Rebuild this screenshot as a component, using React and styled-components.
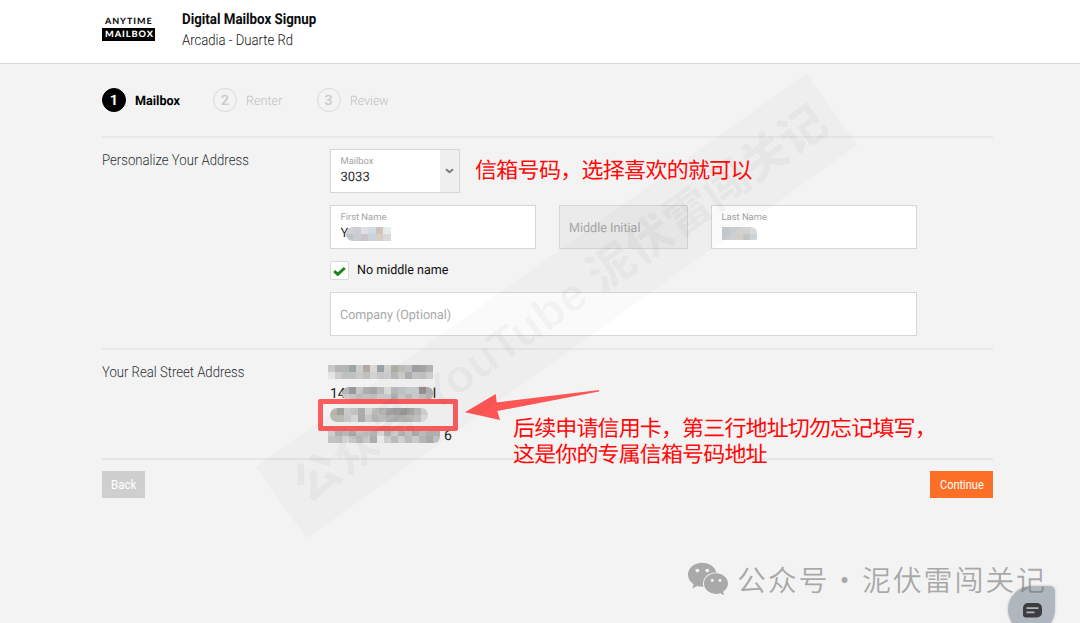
import React, { useLayoutEffect, useRef, useState } from "react";
import styled, { createGlobalStyle } from "styled-components";
import { FaWeixin } from "react-icons/fa";

const Global = createGlobalStyle`
  *, *::before, *::after { box-sizing: border-box; }
  html, body { margin: 0; padding: 0; }
  body { background: #f3f3f3; font-family: Roboto, "Liberation Sans", sans-serif; overflow: hidden; text-rendering: geometricPrecision; }
`;

const Page = styled.div`
  position: relative;
  height: 623px;
  overflow: hidden;
  background: #f3f3f3;
`;

/* Text set to an exact measure, standing in for a condensed face. */
const FitBox = styled.span`
  display: inline-block;
  width: ${(p) => p.$w}px;
  white-space: nowrap;
`;
const FitInner = styled.span`
  display: inline-block;
  transform-origin: 0 50%;
`;
function Fit({ w, children }) {
  const ref = useRef(null);
  const [k, setK] = useState(1);
  useLayoutEffect(() => {
    setK(w / ref.current.offsetWidth);
  }, [w]);
  return (
    <FitBox $w={w}>
      <FitInner ref={ref} style={{ transform: `scaleX(${k})` }}>{children}</FitInner>
    </FitBox>
  );
}

const Header = styled.header`
  display: flex;
  height: 64px;
  padding: 8px 0 0 102px;
  gap: 27.2px;
  background: #fff;
  border-bottom: 1px solid #d9d9d9;
`;
const Logo = styled.div`
  width: 53px;
  padding-top: 7px;
  font: 900 8.8px/11px Lato, sans-serif;
  letter-spacing: 0.9px;
  text-align: center;
  color: #111;
`;
const LogoTop = styled.div`
  height: 12.5px;
  line-height: 12px;
`;
const LogoBar = styled.div`
  height: 13.5px;
  line-height: 12px;
  background: #000;
  color: #fff;
`;
const Title = styled.div`
  font-size: 15px;
  line-height: 22px;
  font-weight: 700;
  color: #0c0c0c;
`;
const Subtitle = styled.div`
  font-size: 15px;
  line-height: 21px;
  font-weight: 300;
  color: #111;
`;

const Content = styled.main`
  width: 891px;
  margin-left: 102px;
`;
const Steps = styled.nav`
  display: flex;
  height: 72px;
  padding-top: 24px;
  align-items: flex-start;
`;
const Step = styled.div`
  display: flex;
  align-items: center;
  gap: 9px;
  height: 24px;
  width: ${(p) => p.$w}px;
  font-size: 13px;
  font-weight: ${(p) => (p.$active ? 700 : 300)};
  color: ${(p) => (p.$active ? "#000" : "#c0c0c0")};
`;
const StepNumber = styled.span`
  display: flex;
  align-items: center;
  justify-content: center;
  width: 24px;
  height: 24px;
  border-radius: 50%;
  font-size: 14.5px;
  font-weight: 700;
  border: 1.5px solid ${(p) => (p.$active ? "#000" : "#d9d9d9")};
  background: ${(p) => (p.$active ? "#000" : "transparent")};
  color: ${(p) => (p.$active ? "#fff" : "#cecece")};
`;
const StepLabel = styled.span`
  padding-top: 2px;
`;

const Section = styled.section`
  display: flex;
  height: ${(p) => p.$h}px;
  padding-top: 11px;
  border-top: 2px solid #e8e8e8;
`;
const SectionTitle = styled.h2`
  width: 228px;
  margin: 0;
  padding-top: 1px;
  font-size: 15px;
  line-height: 20px;
  font-weight: 300;
  color: #2a2f32;
`;
const Form = styled.div`
  width: 587px;
  display: flex;
  flex-direction: column;
`;
const FieldRow = styled.div`
  display: flex;
  justify-content: space-between;
  margin-bottom: 12px;
`;
const Field = styled.div`
  display: flex;
  flex-direction: column;
  justify-content: ${(p) => (p.$empty ? "center" : "flex-start")};
  position: relative;
  width: ${(p) => p.$w}px;
  height: 44px;
  padding: ${(p) => (p.$empty ? "2px 0 0 9px" : "5px 0 0 9.5px")};
  border: 1px solid #d6d6d6;
  background: ${(p) => (p.$disabled ? "#ebebeb" : "#fff")};
`;
const FieldLabel = styled.span`
  font-size: 9.4px;
  line-height: 14px;
  color: #a4a4a4;
`;
const FieldValue = styled.span`
  display: flex;
  align-items: center;
  height: 17px;
  font-size: 13px;
  color: #2a2a2a;
`;
const Placeholder = styled.span`
  font-size: 13px;
  color: #a8a8a8;
`;
const SelectButton = styled.span`
  position: absolute;
  top: 0;
  right: 0;
  bottom: 0;
  width: 19px;
  display: flex;
  align-items: center;
  justify-content: center;
  background: #f0f0f0;
`;
const CheckRow = styled.label`
  display: flex;
  gap: 8px;
  height: 31px;
  font-size: 13px;
  line-height: 19px;
  color: #111;
`;
const CheckBox = styled.span`
  display: flex;
  align-items: center;
  justify-content: center;
  width: 19px;
  height: 19px;
  border: 1px solid #d9d9d9;
  border-radius: 2px;
  background: #fff;
`;

const MosaicGrid = styled.span`
  display: grid;
  grid-template-columns: repeat(${(p) => p.$cols}, ${(p) => p.$cw}px);
  grid-auto-rows: ${(p) => p.$rh}px;
  margin-left: ${(p) => p.$x || 0}px;
  border-radius: ${(p) => p.$r || 0};
  overflow: hidden;
`;
const MosaicCell = styled.i`
  background: ${(p) => p.$c};
`;
function Mosaic({ rows, rh = 7, cw = 7, x, r }) {
  return (
    <MosaicGrid $cols={rows[0].length} $rh={rh} $cw={cw} $x={x} $r={r}>
      {rows.flat().map((c, i) => (
        <MosaicCell key={i} $c={c} />
      ))}
    </MosaicGrid>
  );
}

const Address = styled.div`
  margin-left: -2px;
  padding-top: 0.6px;
`;
const AddressLine = styled.div`
  display: flex;
  align-items: center;
  height: 21.4px;
  font-size: 14px;
  color: #222;
`;
const AddressText = styled.span`
  margin-left: ${(p) => p.$x || 0}px;
`;

const Footer = styled.footer`
  display: flex;
  justify-content: space-between;
  padding-top: 11px;
  border-top: 2px solid #e5e5e5;
`;
const Button = styled.button`
  display: flex;
  align-items: center;
  justify-content: center;
  width: ${(p) => p.$w}px;
  height: 27px;
  padding: 0;
  border: 0;
  font: 400 12px Roboto, sans-serif;
  color: #fff;
  background: ${(p) => (p.$primary ? "#fb6f26" : "#cfcfcf")};
`;

const Ribbon = styled.div`
  position: absolute;
  left: 218px;
  top: 261.5px;
  width: 677px;
  height: 88px;
  padding-left: 8px;
  display: flex;
  align-items: center;
  justify-content: center;
  transform: rotate(-35.57deg);
  background: rgba(0, 0, 0, 0.018);
  color: rgba(0, 0, 0, 0.03);
  font: 900 46px/88px "Liberation Sans", "Noto Sans CJK SC", sans-serif;
  white-space: nowrap;
  pointer-events: none;
`;
const Note = styled.p`
  position: absolute;
  left: ${(p) => p.$x}px;
  top: ${(p) => p.$y}px;
  margin: 0;
  font: 400 22px/25.5px "Noto Sans CJK SC", sans-serif;
  letter-spacing: ${(p) => p.$ls}px;
  white-space: nowrap;
  color: #ff0808;
`;
const Highlight = styled.div`
  position: absolute;
  left: 318px;
  top: 399px;
  width: 140px;
  height: 31.5px;
  border: 5px solid #fb5c5c;
  border-radius: 2px;
`;
const Arrow = styled.svg`
  position: absolute;
  left: 460px;
  top: 385px;
`;
const Chat = styled.div`
  position: absolute;
  left: 1008px;
  top: 586px;
  width: 47px;
  height: 47px;
  padding: 17px 0 0 15px;
  border-radius: 24px 5px 24px 24px;
  background: #b0b6be;
  box-shadow: 0 0 3px rgba(0, 0, 0, 0.2);
`;
const Credit = styled.div`
  position: absolute;
  left: 687px;
  top: 558.5px;
  display: flex;
  align-items: center;
  height: 40px;
  color: rgba(110, 110, 110, 0.56);
  font: 350 29px/38px "Noto Sans CJK SC", sans-serif;
  letter-spacing: 1.8px;
  white-space: nowrap;
`;
const CreditPart = styled.span`
  margin-left: ${(p) => p.$x}px;
  width: ${(p) => p.$w}px;
`;

const firstName = [
  ["#d2d2d3", "#cdced4", "#dfdee4", "#cfdae2", "#cfc3b9", "#e6ece9"],
  ["#c0c2c4", "#c9cdd3", "#c9c5ca", "#ccd3d8", "#d9cdc6", "#d9dbd9"],
];
const lastName = [
  ["#c5cbd0", "#cfd2d5", "#d3d1ce", "#d1d3d3", "#d9dcdd"],
  ["#c8cdd3", "#cdcfd1", "#d2cdc8", "#c3c5c4", "#cdd3d7"],
];
const line1 = [
  ["#c9c9c9", "#b5b5b5", "#b3b7ba", "#9fa5a5", "#cdcdcb", "#b2a9a5", "#dad9d8", "#9ba0a4", "#cfcfd0", "#b0afa4", "#bdbdbb", "#c2c2c4", "#a3a3a5", "#a7a7aa", "#b5b5b5"],
  ["#e5e5e5", "#cccccc", "#bfc0c2", "#c0c2c2", "#c9c9c9", "#c2bfbe", "#cfd2d1", "#c8c8ca", "#cfcfcf", "#bababa", "#cdccc9", "#aeb2b4", "#c6c6c8", "#c3c3c5", "#d0d0d0"],
];
const line2 = [
  ["#b5b6b6", "#999a9c", "#c7c7c6", "#afb2b0", "#aaaaa9", "#bebebc", "#dfddd8", "#b9bcbd", "#c4c4c4", "#c8cfd1", "#c9cdd1", "#9c928c", "#b5b7ba"],
  ["#cbcbcb", "#c5c5c5", "#bfbfbf", "#c4c4c4", "#c1c1c1", "#cccccc", "#c9ccce", "#aeb3b8", "#cacbc9", "#b9bdc0", "#cdcfcf", "#bec0c2", "#b5b5b5"],
];
const line3 = [
  ["#bbb6ae", "#a7a6a3", "#cfcfcf", "#c6c6c6", "#b1b1b0", "#d8d8d8", "#c4c3c0", "#b7b7b5", "#a9aaaa", "#a4a3a1", "#9e9e9c", "#aaa8a4", "#b9b9b7", "#d1d1d1"],
  ["#bebcb7", "#bdbdba", "#cacaca", "#dadada", "#aeaeae", "#cacaca", "#bdbdbb", "#c5c5c4", "#b8b8b8", "#b7b5b1", "#b5b5b3", "#bdbbb9", "#c3c3c2", "#dcdcdc"],
];
const line4 = [
  ["#d2d2d2", "#b2b4b6", "#c2c2c2", "#aeb1b3", "#c9c7c4", "#c0c2c4", "#b7b7b9", "#dcdcdc", "#bababa", "#d5d2cc", "#b6b6b6", "#c9c9c9", "#adadad", "#bebebe", "#b0b2b4", "#b4b4b4"],
  ["#c7c7c7", "#c4c4c6", "#dddddd", "#cbcbcb", "#bdc0c2", "#cccccc", "#b0b0b2", "#eeeeee", "#d3d3d3", "#bfbfbf", "#d5d5d5", "#bfbfbf", "#cfcfcf", "#b9b9bb", "#abadaf", "#c3c3c3"],
];

export default function App() {
  return (
    <Page>
      <Global />
      <Header>
        <Logo>
          <LogoTop><Fit w={47}>ANYTIME</Fit></LogoTop>
          <LogoBar><Fit w={49}>MAILBOX</Fit></LogoBar>
        </Logo>
        <div>
          <Title><Fit w={134}>Digital Mailbox Signup</Fit></Title>
          <Subtitle><Fit w={111}>Arcadia - Duarte Rd</Fit></Subtitle>
        </div>
      </Header>
      <Content>
        <Steps>
          <Step $active $w={111}>
            <StepNumber $active>1</StepNumber>
            <StepLabel><Fit w={44.5}>Mailbox</Fit></StepLabel>
          </Step>
          <Step $w={103.5}>
            <StepNumber>2</StepNumber>
            <StepLabel><Fit w={36}>Renter</Fit></StepLabel>
          </Step>
          <Step $w={90}>
            <StepNumber>3</StepNumber>
            <StepLabel><Fit w={39}>Review</Fit></StepLabel>
          </Step>
        </Steps>
        <Section $h={212}>
          <SectionTitle><Fit w={146.5}>Personalize Your Address</Fit></SectionTitle>
          <Form>
            <FieldRow>
              <Field $w={130}>
                <FieldLabel>Mailbox</FieldLabel>
                <FieldValue>3033</FieldValue>
                <SelectButton>
                  <svg width="9" height="6" viewBox="0 0 9 6">
                    <path d="M1 1.2 4.5 4.2 8 1.2" fill="none" stroke="#7c7c7c" strokeWidth="2" />
                  </svg>
                </SelectButton>
              </Field>
            </FieldRow>
            <FieldRow>
              <Field $w={206}>
                <FieldLabel>First Name</FieldLabel>
                <FieldValue>Y<Mosaic rows={firstName} cw={7.5} x={-2.5} r="7px 0 0 7px" /></FieldValue>
              </Field>
              <Field $w={129} $empty $disabled>
                <Placeholder><Fit w={71.5}>Middle Initial</Fit></Placeholder>
              </Field>
              <Field $w={206}>
                <FieldLabel>Last Name</FieldLabel>
                <FieldValue><Mosaic rows={lastName} rh={6.5} r="0 6px 2px 0" /></FieldValue>
              </Field>
            </FieldRow>
            <CheckRow>
              <CheckBox>
                <svg width="13" height="11" viewBox="0 0 13 11">
                  <path d="M1.2 6 4.7 9.400 11.8 3" fill="none" stroke="#1d8420" strokeWidth="3" />
                </svg>
              </CheckBox>
              <Fit w={91.5}>No middle name</Fit>
            </CheckRow>
            <Field $w={587} $empty>
              <Placeholder><Fit w={111.5}>Company (Optional)</Fit></Placeholder>
            </Field>
          </Form>
        </Section>
        <Section $h={110}>
          <SectionTitle><Fit w={142.5}>Your Real Street Address</Fit></SectionTitle>
          <Address>
            <AddressLine><Mosaic rows={line1} /></AddressLine>
            <AddressLine>
              <AddressText $x={2}>14</AddressText>
              <Mosaic rows={line2} rh={6.5} x={-4} r="7px 6px 6px 7px" />
              <AddressText>l</AddressText>
            </AddressLine>
            <AddressLine><Mosaic rows={line3} x={2} r="7px" /></AddressLine>
            <AddressLine>
              <Mosaic rows={line4} rh={6.5} r="0 0 6px 0" />
              <AddressText $x={4}>6</AddressText>
            </AddressLine>
          </Address>
        </Section>
        <Footer>
          <Button $w={43}><Fit w={25}>Back</Fit></Button>
          <Button $w={63} $primary><Fit w={44}>Continue</Fit></Button>
        </Footer>
      </Content>

      <Highlight />
      <Arrow width="145" height="40" viewBox="460 385 145 40">
        <path d="M465 412.3 495.7 394 496.7 402.5 599 390v1.5L497.3 411 500 420Z" fill="#ff5555" />
      </Arrow>
      <Ribbon><Fit w={644}>公众号 YouTube 泥伏雷闯关记</Fit></Ribbon>
      <Note $x={475} $y={157} $ls={-0.7}>信箱号码，选择喜欢的就可以</Note>
      <Note $x={513} $y={415} $ls={-0.86}>后续申请信用卡，第三行地址切勿忘记填写，<br />这是你的专属信箱号码地址</Note>
      <Chat>
        <svg width="19" height="15" viewBox="0 0 19 15">
          <path d="M5 0h9a5 5 0 0 1 5 5v4.500a5 5 0 0 1-5 5H3a3 3 0 0 1-3-3V5a5 5 0 0 1 5-5Z" fill="#3c3d40" />
          <path d="M3.500 5.200h12M3.500 9.400h8" stroke="#b0b6be" strokeWidth="1.800" />
        </svg>
      </Chat>
      <Credit>
        <FaWeixin size={42} />
        <CreditPart $x={8} $w={105}>公众号</CreditPart>
        <CreditPart $x={-12} $w={24}>·</CreditPart>
        <CreditPart $x={8} $w={190}>泥伏雷闯关记</CreditPart>
      </Credit>
    </Page>
  );
}
